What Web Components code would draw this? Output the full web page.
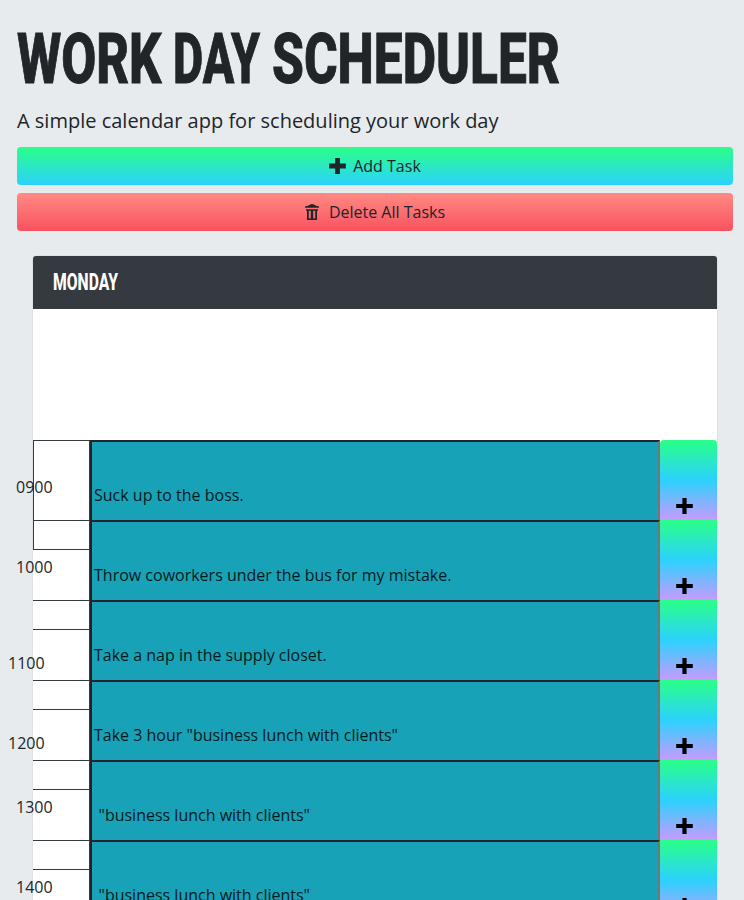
<!DOCTYPE html>
<html lang="en">
<head>
<meta charset="utf-8">
<title>Work Day Scheduler</title>
<style>
html{height:900px;overflow:hidden}
body{margin:0;height:900px;overflow:hidden;background:#e7ebee;color:#212529;font:400 16px/24px "Open Sans",sans-serif}
</style>
</head>
<body>
<work-scheduler></work-scheduler>
<script>
const define=(name,html,setup)=>{
  const t=document.createElement('template');t.innerHTML=html;
  customElements.define(name,class extends HTMLElement{
    constructor(){super();this.attachShadow({mode:'open'}).append(t.content.cloneNode(true));}
    connectedCallback(){if(setup)setup(this,this.shadowRoot);}
  });
};
define('plus-icon',`<style>:host{display:block;width:17px;height:16px}svg{display:block}path{stroke:currentColor;stroke-width:var(--arm,4.8)}</style>
<svg width="17" height="16" viewBox="0 0 17 16"><path d="M8.500 0v16M.2 8h16.600"/></svg>`);
define('trash-icon',`<style>:host{display:block;width:14px;height:17px}svg{display:block}</style>
<svg width="14" height="17" viewBox="0 0 14 17" fill="currentColor"><path d="M0 3.700V2.500L3.500 1.500Q5 0 7 0t3.500 1.500L14 2.500v1.200z"/><path fill-rule="evenodd" d="M1 5.200h12v1.600h-1V16H2V6.800H1zM3.800 6.800v7.600h2V6.800zM8.200 6.800v7.600h2V6.800z"/></svg>`);
define('action-button',`<style>:host{display:flex;align-items:center;justify-content:center;gap:7px;height:38px;border-radius:4px;background:linear-gradient(#2aff87,#2bd2fd)}
:host([danger]){background:linear-gradient(#ff8a84,#f9525f)}</style><slot name="icon"></slot><span><slot></slot></span>`);
define('squeezed-word',`<style>:host{display:block;flex:none}span{display:inline-block;white-space:nowrap;transform-origin:0 0}</style><span></span>`,(el,root)=>{
  const s=root.querySelector('span'),w=+el.getAttribute('width');
  s.textContent=el.getAttribute('label');el.style.width=w+'px';
  s.style.transform='scaleX('+w/s.getBoundingClientRect().width+')';
});
define('time-block',`<style>
:host{display:grid;grid-template-columns:57px 570px 57px;height:80px}
.hour{position:relative;border-top:1px solid #343a40;border-right:1px solid #343a40;box-sizing:border-box}
.hour span{position:absolute;left:-17px;top:34px}
:host([wide]) .hour span{left:-25px;top:50px}
:host([tail]) .hour::before{content:"";position:absolute;left:0;right:0;top:28px;height:1px;background:#343a40}
.edge{display:none;position:absolute;left:0;top:0;width:1px;height:79px;background:#343a40}
:host([edge]) .edge{display:block}:host([edge][tail]) .edge{height:28px}
.task{box-sizing:border-box;background:#17a2b8;border-style:solid;border-width:2px 2px 0 2px;border-color:#212529 #767676 #212529 #212529;padding:41px 2px 0;white-space:pre;color:#061a20}
:host([indent]) .task{padding-left:6.500px}
.add{background:linear-gradient(#2aff87,#2bd2fd 50%,#c79bff);display:flex;align-items:flex-end;box-sizing:border-box;padding:0 0 6px 16px;color:#000;--arm:4.2}
:host(:first-of-type) .add{border-radius:4px 4px 0 0}
</style>
<div class="hour"><i class="edge"></i><span><slot name="hour"></slot></span></div><div class="task"><slot></slot></div><div class="add"><plus-icon></plus-icon></div>`);
define('day-card',`<style>:host{display:block;width:684px;height:644px;background:#fff;border-radius:4px 4px 0 0;box-shadow:0 0 0 1px #dfe2e5}
header{display:flex;align-items:center;height:53px;box-sizing:border-box;padding:0 0 2px 20px;background:#343a40;color:#fff;border-radius:3px 3px 0 0;margin-bottom:131px;font:800 23.5px/28px Roboto,sans-serif}</style>
<header><slot name="title"></slot></header><slot></slot>`);
define('work-scheduler',`<style>
:host{display:block;box-sizing:border-box;padding:17px 11px 0 17px}
h1{display:flex;margin:0;height:84px;font:800 70px/84px Roboto,sans-serif;-webkit-text-stroke:1px currentColor}
p{margin:7px 0 14px;font-size:20px;line-height:25px}
action-button{margin-bottom:8px}
day-card{margin:25px 0 0 16px}
</style>
<h1><squeezed-word width="144.5" label="WORK" style="margin-right:11px"></squeezed-word><squeezed-word width="87" label="DAY" style="margin-right:12px"></squeezed-word><squeezed-word width="288" label="SCHEDULER"></squeezed-word></h1>
<p>A simple calendar app for scheduling your work day</p>
<action-button><plus-icon slot="icon"></plus-icon>Add Task</action-button>
<action-button danger><trash-icon slot="icon" style="margin-right:3px"></trash-icon>Delete All Tasks</action-button>
<day-card><squeezed-word slot="title" width="65" label="MONDAY"></squeezed-word>
<time-block edge><span slot="hour">0900</span>Suck up to the boss.</time-block>
<time-block edge tail><span slot="hour">1000</span>Throw coworkers under the bus for my mistake.</time-block>
<time-block wide tail><span slot="hour">1100</span>Take a nap in the supply closet.</time-block>
<time-block wide tail><span slot="hour">1200</span>Take 3 hour "business lunch with clients"</time-block>
<time-block tail indent><span slot="hour">1300</span>"business lunch with clients"</time-block>
<time-block tail indent><span slot="hour">1400</span>"business lunch with clients"</time-block>
</day-card>`);
</script>
</body>
</html>
